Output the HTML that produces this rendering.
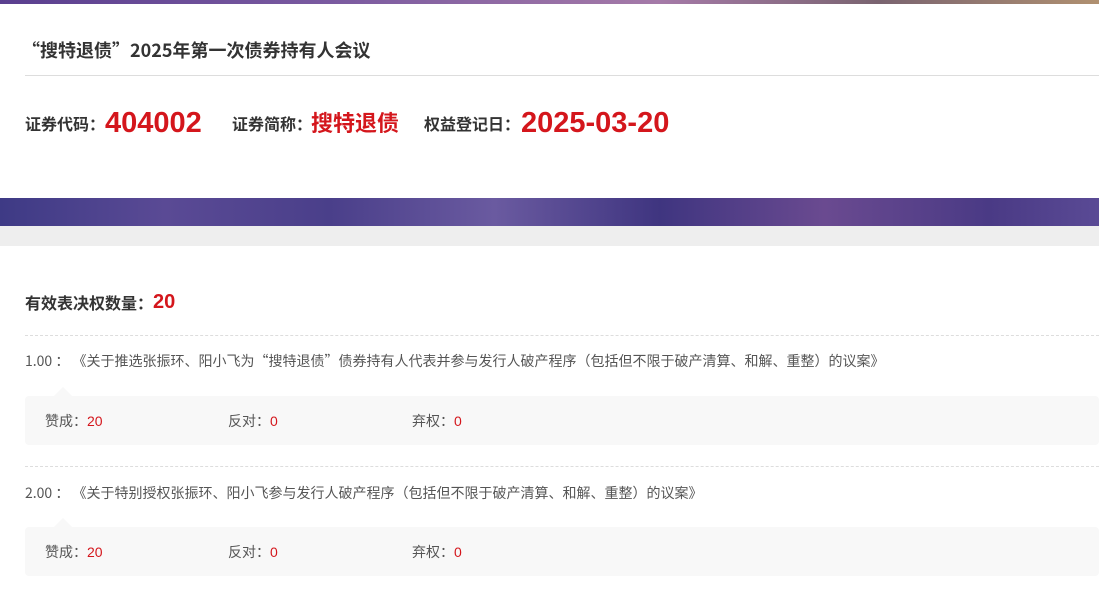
<!DOCTYPE html><html><head><meta charset="utf-8"><style>
body{margin:0;width:1099px;height:609px;overflow:hidden;background:#fff;font-family:"Noto Sans CJK SC","Liberation Sans",sans-serif;position:relative}
.a{position:absolute;white-space:nowrap}
.top{left:0;top:0;width:1099px;height:4px;background:linear-gradient(90deg,#5a3f8f,#7a5aa0 30%,#a57aa8 60%,#7a6470 80%,#b09070)}
.ban{left:0;top:198px;width:1099px;height:28px;background:linear-gradient(90deg,#3e3a85,#5a4a95 15%,#4a3f8a 30%,#6a5aa0 45%,#3f3580 60%,#6a4a90 75%,#4a3a85 90%,#5a4a95)}
.gray{left:0;top:226px;width:1099px;height:20px;background:#eeeeee}
.lab{font-size:16px;font-weight:bold;color:#333}
.val{font-family:"Liberation Sans",sans-serif;font-size:29px;font-weight:bold;color:#d4161c;transform-origin:left top}
.dash{left:25px;width:1074px;border-top:1px dashed #ddd;height:0}
.it{left:25px;font-size:14px;color:#555;line-height:20px}
.box{left:25px;width:1074px;height:49px;background:#f8f8f8;border-radius:4px}
.tri{width:0;height:0;border-left:9px solid transparent;border-right:9px solid transparent;border-bottom:9px solid #f8f8f8}
.v{font-size:14px;color:#555;line-height:20px}
.v b{font-weight:normal;color:#d4161c;font-family:"Liberation Sans",sans-serif}
</style></head><body>
<div class="a top"></div>
<div class="a" style="left:22px;top:38px;font-size:18px;line-height:24px;font-weight:bold;color:#333">“搜特退债”2025年第一次债券持有人会议</div>
<div class="a" style="left:25px;top:75px;width:1074px;height:1px;background:#ddd"></div>
<div class="a lab" style="left:25px;top:111px;line-height:24px">证券代码：</div>
<div class="a val" style="left:105px;top:107px">404002</div>
<div class="a lab" style="left:232px;top:111px;line-height:24px">证券简称：</div>
<div class="a" style="left:311px;top:106px;font-size:22px;line-height:32px;font-weight:bold;color:#d4161c">搜特退债</div>
<div class="a lab" style="left:424px;top:111px;line-height:24px">权益登记日：</div>
<div class="a val" style="left:521px;top:107px">2025-03-20</div>
<div class="a ban"></div>
<div class="a gray"></div>
<div class="a lab" style="left:25px;top:290px;line-height:24px">有效表决权数量：</div>
<div class="a" style="left:153px;top:290px;font-family:'Liberation Sans',sans-serif;font-size:20px;font-weight:bold;color:#d4161c;line-height:24px">20</div>
<div class="a dash" style="top:335px"></div>
<div class="a it" style="top:351px">1.00 ： 《关于推选张振环、阳小飞为“搜特退债”债券持有人代表并参与发行人破产程序（包括但不限于破产清算、和解、重整）的议案》</div>
<div class="a tri" style="left:54px;top:387px"></div>
<div class="a box" style="top:396px"></div>
<div class="a v" style="left:45px;top:411px">赞成：<b>20</b></div>
<div class="a v" style="left:228px;top:411px">反对：<b>0</b></div>
<div class="a v" style="left:412px;top:411px">弃权：<b>0</b></div>
<div class="a dash" style="top:466px"></div>
<div class="a it" style="top:483px">2.00 ： 《关于特别授权张振环、阳小飞参与发行人破产程序（包括但不限于破产清算、和解、重整）的议案》</div>
<div class="a tri" style="left:54px;top:518px"></div>
<div class="a box" style="top:527px"></div>
<div class="a v" style="left:45px;top:542px">赞成：<b>20</b></div>
<div class="a v" style="left:228px;top:542px">反对：<b>0</b></div>
<div class="a v" style="left:412px;top:542px">弃权：<b>0</b></div>
</body></html>
